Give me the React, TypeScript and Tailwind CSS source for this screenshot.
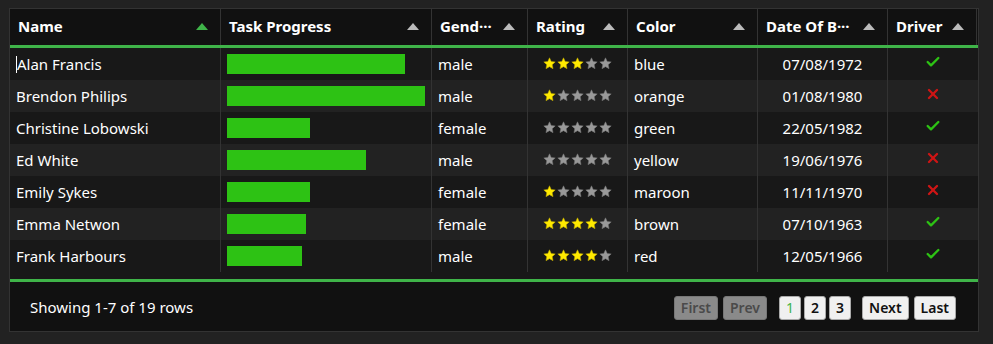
import { Check, X } from "lucide-react";

interface Person {
  name: string;
  progress: number;
  gender: string;
  rating: number;
  color: string;
  dob: string;
  driver: boolean;
}

const ROWS: Person[] = [
  { name: "Alan Francis", progress: 90, gender: "male", rating: 3, color: "blue", dob: "07/08/1972", driver: true },
  { name: "Brendon Philips", progress: 100, gender: "male", rating: 1, color: "orange", dob: "01/08/1980", driver: false },
  { name: "Christine Lobowski", progress: 42, gender: "female", rating: 0, color: "green", dob: "22/05/1982", driver: true },
  { name: "Ed White", progress: 70, gender: "male", rating: 0, color: "yellow", dob: "19/06/1976", driver: false },
  { name: "Emily Sykes", progress: 42, gender: "female", rating: 1, color: "maroon", dob: "11/11/1970", driver: false },
  { name: "Emma Netwon", progress: 40, gender: "female", rating: 4, color: "brown", dob: "07/10/1963", driver: true },
  { name: "Frank Harbours", progress: 38, gender: "male", rating: 4, color: "red", dob: "12/05/1966", driver: true },
];

const COLS = [
  { title: "Name", sorted: true },
  { title: "Task Progress" },
  { title: "Gend···" },
  { title: "Rating" },
  { title: "Color" },
  { title: "Date Of B···" },
  { title: "Driver" },
];

const GRID = "grid grid-cols-[211px_211px_96px_100px_130px_130px_89px]";

function SortArrow({ active }: { active?: boolean }) {
  return (
    <svg width="12" height="7" viewBox="0 0 12 7" className="shrink-0">
      <polygon points="6,0 12,7 0,7" fill={active ? "#3fb449" : "#bbbbbb"} />
    </svg>
  );
}

function Star({ on }: { on: boolean }) {
  return (
    <svg width="13" height="13" viewBox="0 0 24 24">
      <polygon
        points="12,1.5 15.1,8.3 22.5,9.1 17,14.1 18.5,21.5 12,17.8 5.5,21.5 7,14.1 1.5,9.1 8.9,8.3"
        fill={on ? "#ffea00" : "#999999"}
        stroke={on ? "#c1ab00" : "#777"}
        strokeWidth="1"
      />
    </svg>
  );
}

function PageBtn({ label, disabled, active }: { label: string; disabled?: boolean; active?: boolean }) {
  let tone = "bg-[#f0f0f0] border-[#aaa] text-[#111] font-semibold";
  if (disabled) tone = "bg-[#8a8a8a] border-[#777] text-[#4a4a4a] font-semibold";
  if (active) tone = "bg-[#f0f0f0] border-[#aaa] text-[#3fb449] font-normal";
  return (
    <span className={`h-[24px] px-[6px] flex items-center rounded-[3px] border text-[14px] ${tone}`}>
      {label}
    </span>
  );
}

export default function App() {
  return (
    <div className="w-[993px] h-[344px] bg-[#222] pt-[8px] pl-[9px] font-['Noto_Sans',sans-serif] text-[15px]">
      <div className="w-[970px] border border-[#333] bg-[#181818]">
        {/* cabeçalho */}
        <div className={`${GRID} bg-[#111] h-[39px] border-b-[3px] border-[#3fb449]`}>
          {COLS.map((c) => (
            <div
              key={c.title}
              className="flex items-center justify-between px-[8px] pb-[1px] border-r border-[#333] text-white font-bold"
            >
              <span className="whitespace-nowrap">{c.title}</span>
              <span className="mr-[4px]">
                <SortArrow active={c.sorted} />
              </span>
            </div>
          ))}
        </div>

        {/* linhas */}
        {ROWS.map((r, i) => (
          <div key={r.name} className={`${GRID} h-[32px] ${i % 2 === 0 ? "bg-[#181818]" : "bg-[#222]"} text-white`}>
            <div className="flex items-center px-[6px] border-r border-[#333]">
              {i === 0 && <span className="w-px h-[17px] bg-white" />}
              {r.name}
            </div>
            <div className="flex items-center px-[6px] border-r border-[#333]">
              <div className="h-[20px] bg-[#2dc214]" style={{ width: `${r.progress}%` }} />
            </div>
            <div className="flex items-center px-[6px] border-r border-[#333]">{r.gender}</div>
            <div className="flex items-center justify-center gap-[1px] pb-[2px] border-r border-[#333]">
              {[0, 1, 2, 3, 4].map((s) => (
                <Star key={s} on={s < r.rating} />
              ))}
            </div>
            <div className="flex items-center px-[6px] border-r border-[#333]">{r.color}</div>
            <div className="flex items-center justify-center border-r border-[#333]">{r.dob}</div>
            <div className="flex items-center justify-center pb-[4px]">
              {r.driver ? (
                <Check size={16} strokeWidth={3.5} color="#2dc214" />
              ) : (
                <X size={16} strokeWidth={3.5} color="#ce1515" />
              )}
            </div>
          </div>
        ))}
        <div className="h-[7px] bg-[#181818]" />

        {/* rodapé */}
        <div className="h-[52px] bg-[#111] border-t-[3px] border-[#3fb449] flex items-center justify-between pl-[20px] pr-[22px] pt-[2px]">
          <span className="text-white">Showing 1-7 of 19 rows</span>
          <div className="flex items-center">
            <div className="flex gap-[5px]">
              <PageBtn label="First" disabled />
              <PageBtn label="Prev" disabled />
            </div>
            <div className="flex gap-[3px] ml-[12px]">
              <PageBtn label="1" active />
              <PageBtn label="2" />
              <PageBtn label="3" />
            </div>
            <div className="flex gap-[5px] ml-[11px]">
              <PageBtn label="Next" />
              <PageBtn label="Last" />
            </div>
          </div>
        </div>
      </div>
    </div>
  );
}
